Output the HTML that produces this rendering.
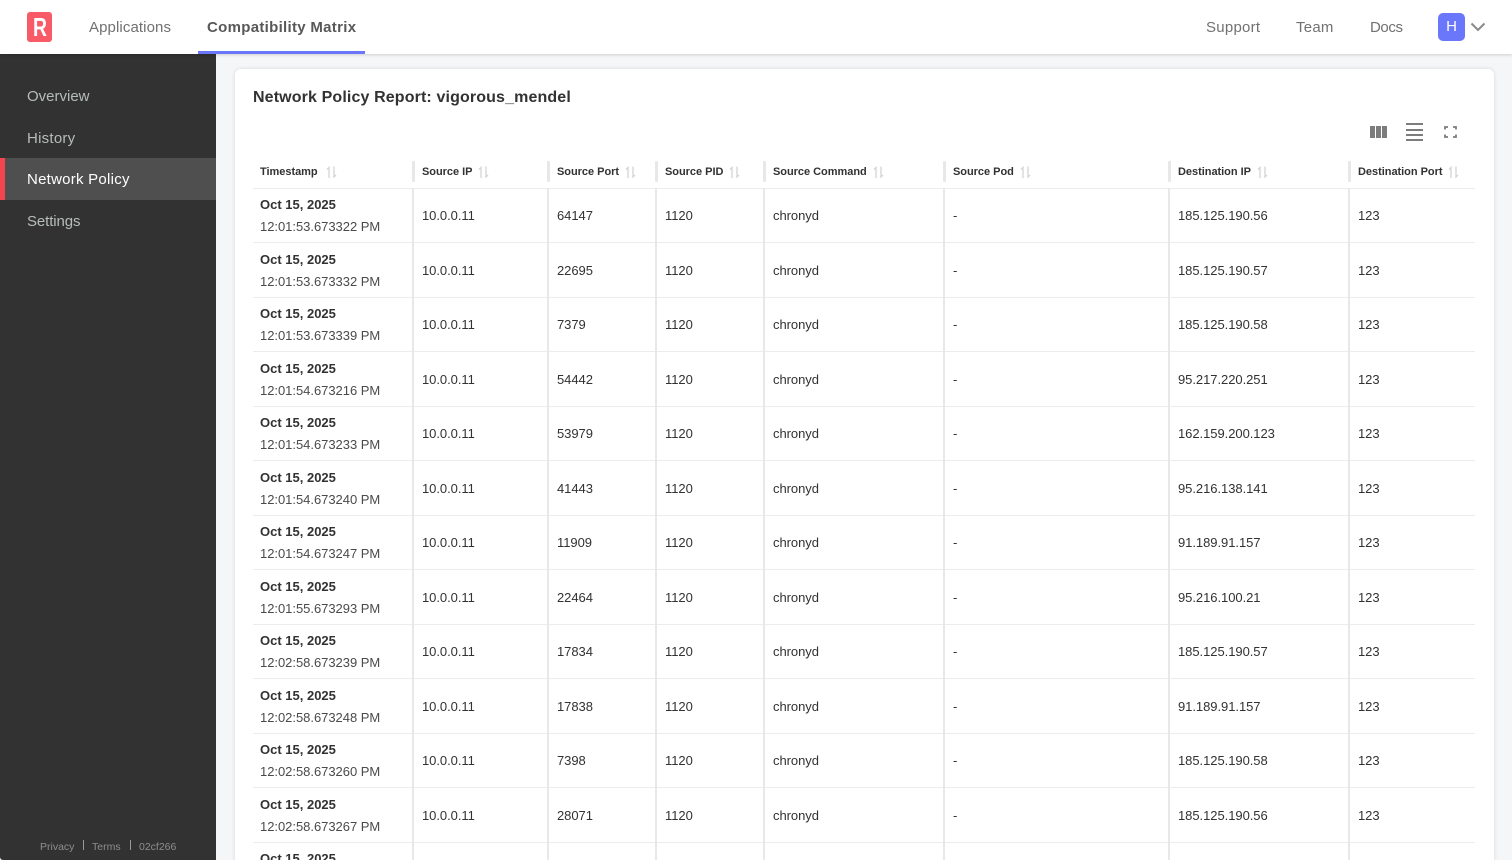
<!DOCTYPE html>
<html><head><meta charset="utf-8"><title>Network Policy</title>
<style>
*{box-sizing:border-box}
html,body{margin:0;width:1512px;height:860px;overflow:hidden;background:#f5f6f8;font-family:"Liberation Sans",sans-serif;color:#323232}
#wrap{position:relative;width:1512px;height:860px;overflow:hidden;background:#f5f6f8}
.a{position:absolute;white-space:nowrap}
#top{position:absolute;left:0;top:0;width:1512px;height:54px;background:#fff;box-shadow:0 1px 3px rgba(0,0,0,.16);z-index:3}
.nav{font-size:15px;line-height:20px;color:#717171;top:18px;font-family:"Liberation Sans",sans-serif}
#side{position:absolute;left:0;top:54px;width:216px;height:806px;background:#323232;border-bottom-left-radius:3px;z-index:2}
.si{position:absolute;left:27px;font-size:15px;line-height:20px;color:#b6bcb9}
#card{position:absolute;left:235px;top:69px;width:1259px;height:830px;background:#fff;border-radius:6px;box-shadow:0 0 4px rgba(0,0,0,.12)}
table{position:absolute;left:253px;top:155px;width:1222px;border-collapse:collapse;table-layout:fixed;background:#fff}
th{height:33px;padding:2px 0 0 7px;text-align:left;font-size:11px;font-weight:bold;color:#323232;border-bottom:1px solid #ececec;position:relative;white-space:nowrap;letter-spacing:-.03px}
th+th{padding-left:9px}
th+th:before{content:"";position:absolute;left:-1px;top:6px;width:3px;height:21px;background:#e8e8e8;border-radius:1px}
th svg{margin-left:6px;vertical-align:-3px}
th:first-child svg{margin-left:8px}
td{padding:2px 0 0 8px;font-size:13px;line-height:21.5px;color:#323232;border-bottom:1px solid #ececec;border-left:2px solid #e8e8e8;white-space:nowrap;overflow:hidden;letter-spacing:-.05px}
tr:nth-child(even) td{height:54px}
tr:nth-child(odd) td{height:55px}
td:first-child{border-left:0;padding-left:7px;color:#4a4a4a;letter-spacing:-.03px}
td b{display:block;color:#323232;letter-spacing:0;position:relative}
tr:nth-child(even) td b{top:-1px}
</style></head><body>
<div id="wrap">
<div id="top">
<svg class="a" style="left:27px;top:12px" width="26" height="30" viewBox="0 0 26 30"><rect width="25" height="30" rx="3" fill="#f85a68"/><text x="6" y="24" textLength="14" lengthAdjust="spacingAndGlyphs" font-family="Liberation Sans" font-weight="bold" font-size="26" fill="#fff">R</text></svg>
<span class="a nav" style="left:89px;letter-spacing:.1px">Applications</span>
<span class="a nav" style="left:207px;font-weight:bold;letter-spacing:.3px;color:#585858">Compatibility Matrix</span>
<div class="a" style="left:198px;top:51px;width:167px;height:3px;background:#6a77fb"></div>
<span class="a nav" style="left:1206px;letter-spacing:.25px">Support</span>
<span class="a nav" style="left:1296px;letter-spacing:.25px">Team</span>
<span class="a nav" style="left:1370px;letter-spacing:-.4px">Docs</span>
<div class="a" style="left:1438px;top:13px;width:27px;height:28px;background:#6a77fb;border-radius:5px;color:#fff;font-size:15px;line-height:28px;text-align:center">H</div>
<svg class="a" style="left:1470px;top:22px" width="16" height="10" viewBox="0 0 16 10"><path d="M1.5 1.500 8 8l6.500-6.500" fill="none" stroke="#8a8a8a" stroke-width="2"/></svg>
</div>
<div id="side">
<span class="si" style="top:33px">Overview</span>
<span class="si" style="top:75px;letter-spacing:.25px">History</span>
<div class="a" style="left:0;top:104px;width:216px;height:42px;background:#4f4f4f;border-left:5px solid #f4444f"></div>
<span class="si" style="top:116px;color:#fff;letter-spacing:.25px">Network Policy</span>
<span class="si" style="top:158px;letter-spacing:-.1px">Settings</span>
<span class="a" style="left:40px;top:786px;font-size:10.500px;line-height:14px;color:#8e8e8e">Privacy</span>
<div class="a" style="left:83px;top:786px;width:1px;height:10px;background:#9a9a9a"></div>
<span class="a" style="left:92px;top:786px;font-size:10.500px;line-height:14px;color:#8e8e8e">Terms</span>
<div class="a" style="left:130px;top:786px;width:1px;height:10px;background:#9a9a9a"></div>
<span class="a" style="left:139px;top:786px;font-size:10.500px;line-height:14px;color:#8e8e8e">02cf266</span>
</div>
<div id="card"></div>
<div class="a" style="left:253px;top:88px;font-size:16px;line-height:20px;font-weight:bold;color:#323232;letter-spacing:.13px">Network Policy Report: vigorous_mendel</div>
<svg class="a" style="left:1370px;top:122px" width="90" height="20" viewBox="0 0 90 20" fill="#7c7c7c">
<rect x="0" y="4" width="5" height="12"/><rect x="6" y="4" width="5" height="12"/><rect x="12" y="4" width="5" height="12"/>
<rect x="36" y="1" width="17" height="2"/><rect x="36" y="7" width="17" height="2"/><rect x="36" y="12" width="17" height="2"/><rect x="36" y="17" width="17" height="2"/>
<path d="M75 7.500V5h3M83 5h3v2.500M86 12.500V15h-3M78 15h-3v-2.500" fill="none" stroke="#7c7c7c" stroke-width="1.800"/>
</svg>
<svg width="0" height="0" style="position:absolute"><defs><g id="s"><path d="M3 12V1.500L1 3.500M8 0.500V11l2-2" fill="none" stroke="#d4d4d4" stroke-width="1.300"/></g></defs></svg>
<table>
<colgroup><col style="width:160px"><col style="width:135px"><col style="width:108px"><col style="width:108px"><col style="width:180px"><col style="width:225px"><col style="width:180px"><col style="width:126px"></colgroup>
<tr><th>Timestamp<svg width="11" height="12"><use href="#s"/></svg></th><th>Source IP<svg width="11" height="12"><use href="#s"/></svg></th><th>Source Port<svg width="11" height="12"><use href="#s"/></svg></th><th>Source PID<svg width="11" height="12"><use href="#s"/></svg></th><th>Source Command<svg width="11" height="12"><use href="#s"/></svg></th><th>Source Pod<svg width="11" height="12"><use href="#s"/></svg></th><th>Destination IP<svg width="11" height="12"><use href="#s"/></svg></th><th>Destination Port<svg width="11" height="12"><use href="#s"/></svg></th></tr>
<tr><td><b>Oct 15, 2025</b>12:01:53.673322 PM</td><td>10.0.0.11</td><td>64147</td><td>1120</td><td>chronyd</td><td>-</td><td>185.125.190.56</td><td>123</td></tr>
<tr><td><b>Oct 15, 2025</b>12:01:53.673332 PM</td><td>10.0.0.11</td><td>22695</td><td>1120</td><td>chronyd</td><td>-</td><td>185.125.190.57</td><td>123</td></tr>
<tr><td><b>Oct 15, 2025</b>12:01:53.673339 PM</td><td>10.0.0.11</td><td>7379</td><td>1120</td><td>chronyd</td><td>-</td><td>185.125.190.58</td><td>123</td></tr>
<tr><td><b>Oct 15, 2025</b>12:01:54.673216 PM</td><td>10.0.0.11</td><td>54442</td><td>1120</td><td>chronyd</td><td>-</td><td>95.217.220.251</td><td>123</td></tr>
<tr><td><b>Oct 15, 2025</b>12:01:54.673233 PM</td><td>10.0.0.11</td><td>53979</td><td>1120</td><td>chronyd</td><td>-</td><td>162.159.200.123</td><td>123</td></tr>
<tr><td><b>Oct 15, 2025</b>12:01:54.673240 PM</td><td>10.0.0.11</td><td>41443</td><td>1120</td><td>chronyd</td><td>-</td><td>95.216.138.141</td><td>123</td></tr>
<tr><td><b>Oct 15, 2025</b>12:01:54.673247 PM</td><td>10.0.0.11</td><td>11909</td><td>1120</td><td>chronyd</td><td>-</td><td>91.189.91.157</td><td>123</td></tr>
<tr><td><b>Oct 15, 2025</b>12:01:55.673293 PM</td><td>10.0.0.11</td><td>22464</td><td>1120</td><td>chronyd</td><td>-</td><td>95.216.100.21</td><td>123</td></tr>
<tr><td><b>Oct 15, 2025</b>12:02:58.673239 PM</td><td>10.0.0.11</td><td>17834</td><td>1120</td><td>chronyd</td><td>-</td><td>185.125.190.57</td><td>123</td></tr>
<tr><td><b>Oct 15, 2025</b>12:02:58.673248 PM</td><td>10.0.0.11</td><td>17838</td><td>1120</td><td>chronyd</td><td>-</td><td>91.189.91.157</td><td>123</td></tr>
<tr><td><b>Oct 15, 2025</b>12:02:58.673260 PM</td><td>10.0.0.11</td><td>7398</td><td>1120</td><td>chronyd</td><td>-</td><td>185.125.190.58</td><td>123</td></tr>
<tr><td><b>Oct 15, 2025</b>12:02:58.673267 PM</td><td>10.0.0.11</td><td>28071</td><td>1120</td><td>chronyd</td><td>-</td><td>185.125.190.56</td><td>123</td></tr>
<tr><td><b>Oct 15, 2025</b>12:02:58.673270 PM</td><td></td><td></td><td></td><td></td><td></td><td></td><td></td></tr>
</table>
</div>
</body></html>
